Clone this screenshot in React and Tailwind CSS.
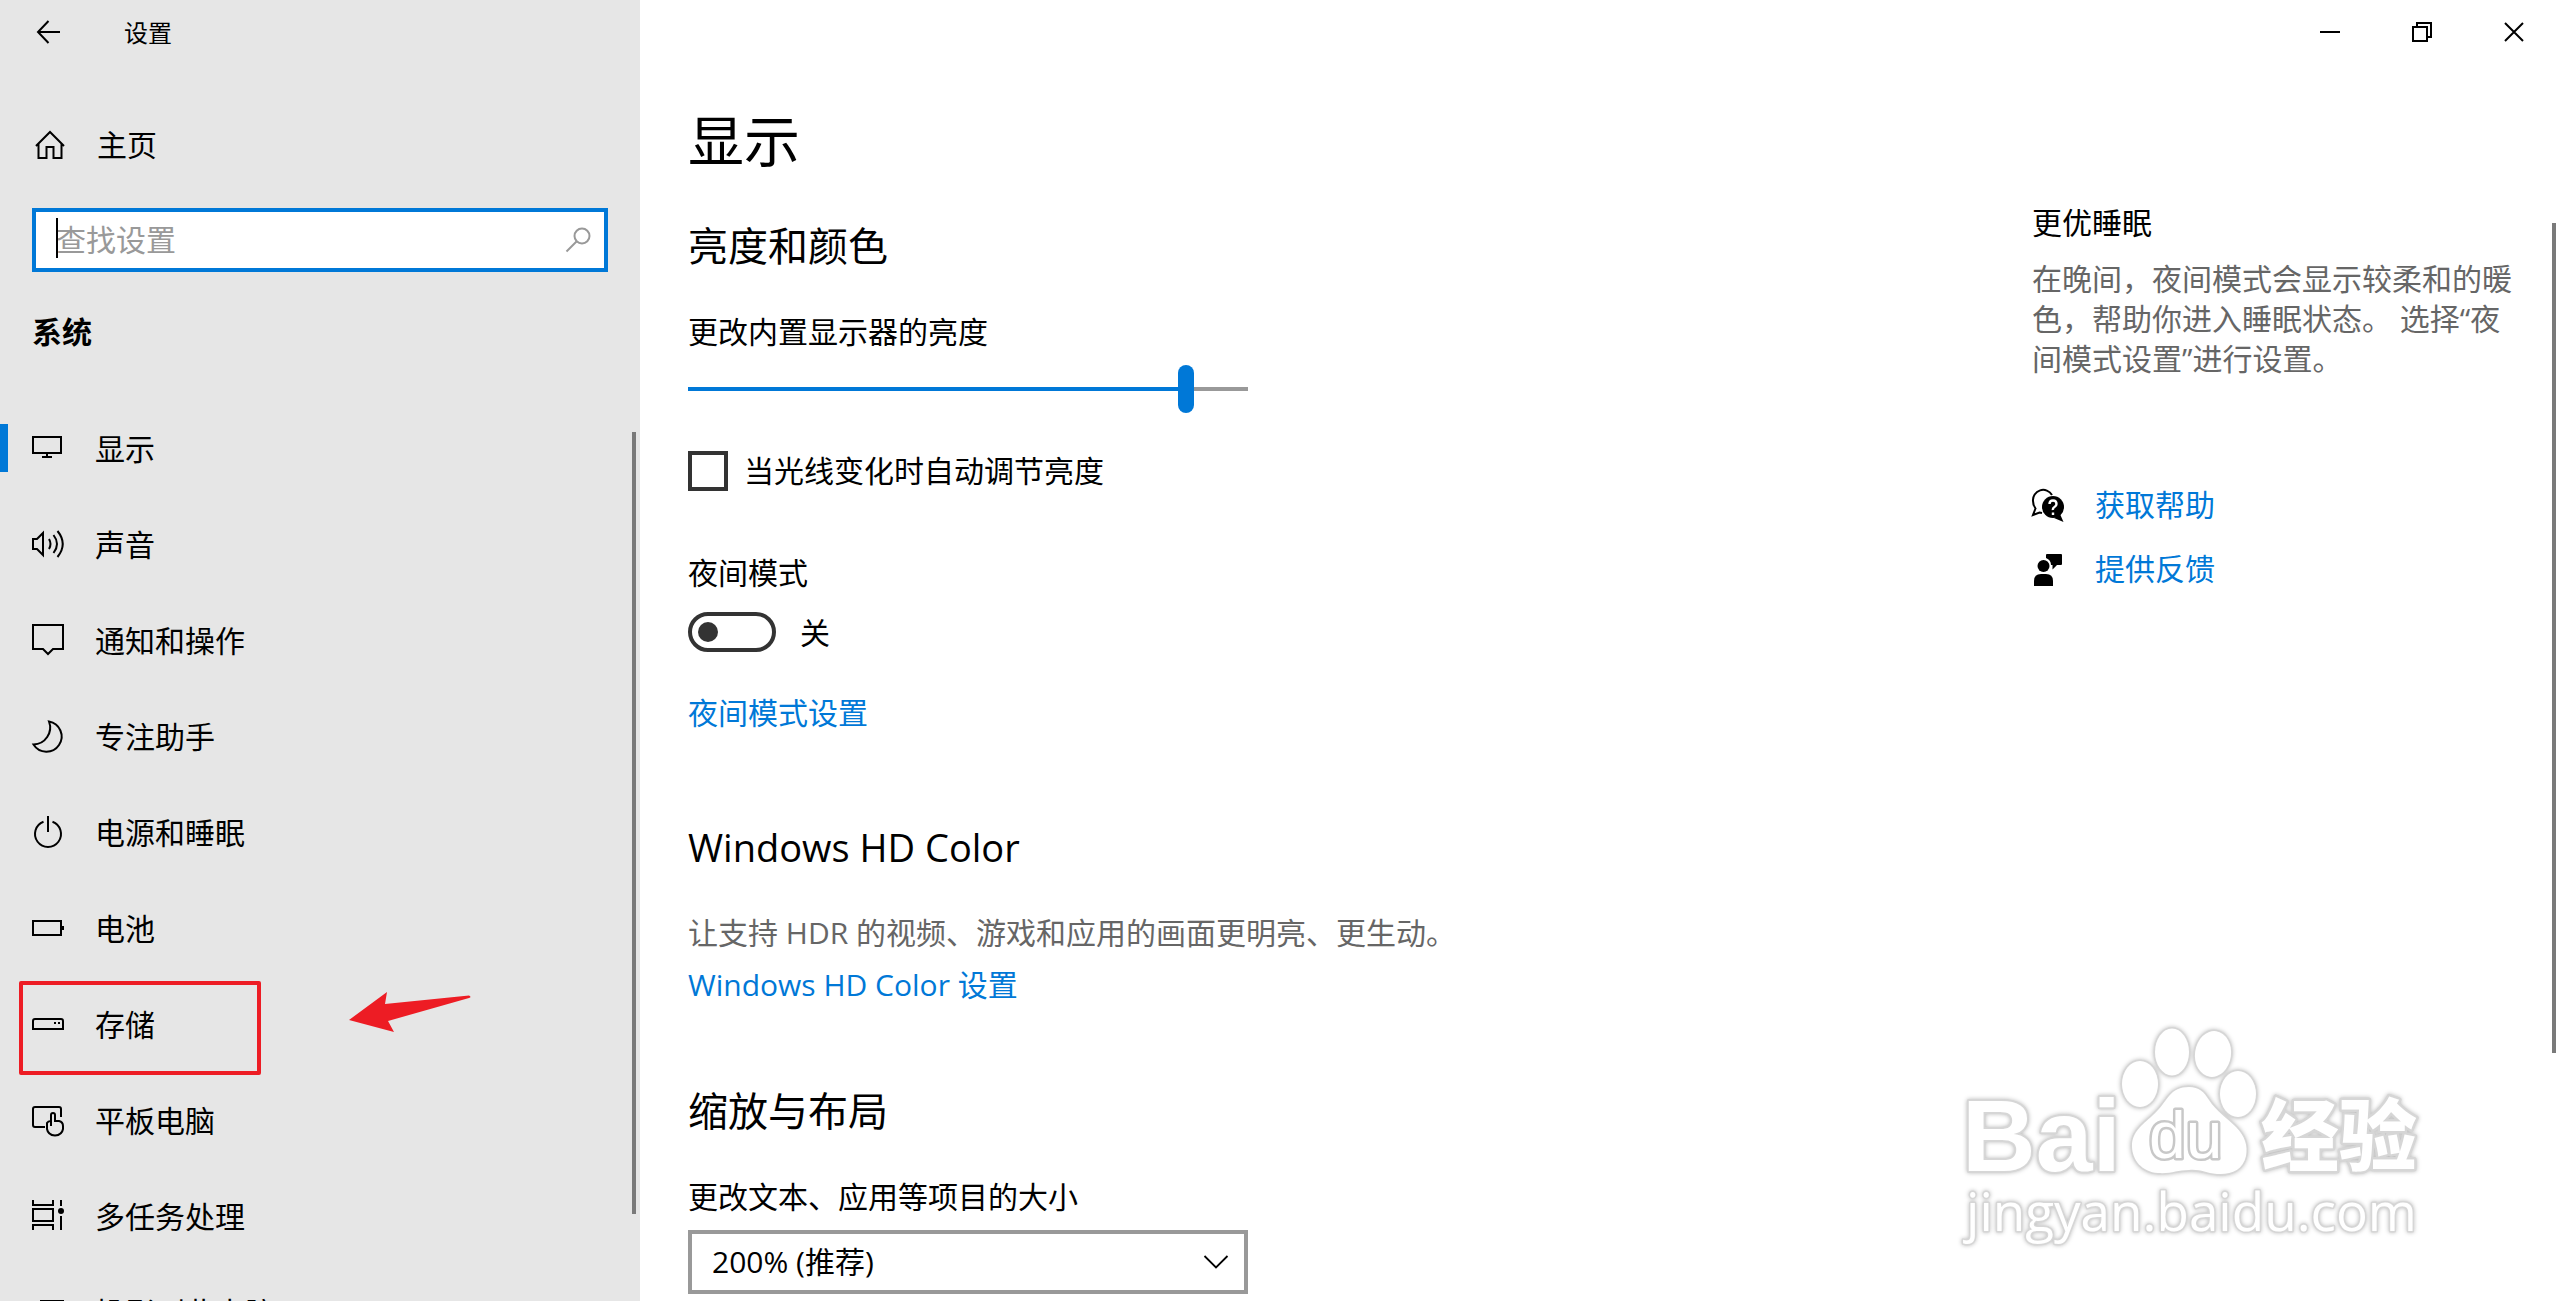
import React, { useState } from "react";

const Icon = ({ children, size = 32, className = "w-8 h-8" }) => (
  <svg
    viewBox={`0 0 ${size} ${size}`}
    fill="none"
    stroke="currentColor"
    strokeWidth="2"
    aria-hidden="true"
    className={`${className} shrink-0 overflow-visible`}
  >
    {children}
  </svg>
);

const navItems = [
  {
    label: "显示",
    icon: <path d="M1 5H29V21H1ZM15 21V25M10 25H20" />,
  },
  {
    label: "声音",
    icon: (
      <path d="M1 11H5L11 5V27L5 21H1ZM17 11Q20 16 17 21M21.500 7Q28.500 16 21.500 25M25.500 3Q36 16 25.500 29" />
    ),
  },
  {
    label: "通知和操作",
    icon: <path d="M1 1H31V25H21L16 30L11 25H1Z" />,
  },
  {
    label: "专注助手",
    icon: <path d="M17 1.500A15.200 15.200 0 1 1 1.500 24.500A17 17 0 0 0 17 1.500Z" />,
  },
  {
    label: "电源和睡眠",
    icon: <path d="M16 0V16M11.500 5.800A13 13 0 1 0 20.500 5.800" />,
  },
  {
    label: "电池",
    icon: <path d="M1 9H29V23H1ZM31 14V18" />,
  },
  {
    label: "存储",
    marked: true,
    icon: (
      <>
        <path d="M1 21V13Q1 11 3 11H29Q31 11 31 13V21Z" />
        <path d="M22 15H24M26 15H28" />
      </>
    ),
  },
  {
    label: "平板电脑",
    icon: (
      <path d="M13 23H3Q1 23 1 21V5Q1 3 3 3H27Q29 3 29 5V13M19 22V11Q19 9 21 9T23 11V17H27Q31 18 31 22V25Q30 31 23 31.500Q16 31 15 25V19Q16 17 19 17" />
    ),
  },
  {
    label: "多任务处理",
    icon: (
      <>
        <path d="M1 0V5H21V0M1 9H21V21H1ZM1 30V25H21V30M29 0V6M29 16V30" />
        <circle cx="29" cy="11" r="3" fill="currentColor" stroke="none" />
      </>
    ),
  },
  {
    label: "投影到此电脑",
    icon: <path d="M9 12V5H31V23H20M1 15H15V29H1Z" />,
  },
];

const Sidebar = () => {
  const [active, setActive] = useState("显示");
  const [query, setQuery] = useState("");

  return (
    <aside className="flex w-1/4 shrink-0 flex-col bg-[#e6e6e6]">
      <header className="flex h-16 shrink-0 items-center gap-16 pl-9">
        <button type="button" aria-label="返回">
          <Icon size={24} className="h-6 w-6">
            <path d="M24 12H2M12.500 1L2 12L12.500 23" />
          </Icon>
        </button>
        <span className="pt-0.5 text-2xl">设置</span>
      </header>

      <button type="button" className="mt-[50px] flex h-16 shrink-0 items-center gap-[31px] pl-[34px]">
        <Icon>
          <path d="M2 16L16 2L30 16M4.500 14V28H12.500V17H19.500V28H27.500V14" />
        </Icon>
        <span className="pb-0.5">主页</span>
      </button>

      <div className="relative mx-8 mt-[30px] shrink-0">
        <input
          type="text"
          aria-label="查找设置"
          placeholder="查找设置"
          value={query}
          onChange={(e) => setQuery(e.target.value)}
          className="h-16 w-full border-4 border-[#0078d7] bg-white pr-16 pb-0.5 pl-5 caret-transparent outline-none placeholder:text-[#999]"
        />
        <span className="absolute top-[10px] left-6 h-10 w-0.5 bg-black" />
        <span className="absolute top-5 right-[18px] text-[#999]">
          <Icon size={24} className="h-6 w-6">
            <circle cx="16" cy="8" r="7.500" />
            <path d="M10.500 13.500L0.500 23.500" />
          </Icon>
        </span>
      </div>

      <h2 className="mx-8 mt-10 shrink-0 font-bold">系统</h2>

      <div className="mt-12 flex min-h-0 flex-1">
        <nav className="min-h-0 flex-1 overflow-hidden">
          <ul>
            {navItems.map(({ label, icon, marked }) => (
              <li key={label} className="relative">
                <button
                  type="button"
                  onClick={() => setActive(label)}
                  className="flex h-24 w-full items-center gap-[31px] pl-8 text-left"
                >
                  <Icon>{icon}</Icon>
                  <span className="pt-0.5">{label}</span>
                </button>
                {active === label && <span className="absolute top-6 left-0 h-12 w-2 bg-[#0078d7]" />}
                {marked && (
                  <>
                    <span className="absolute top-[5px] left-[19px] h-[94px] w-[242px] rounded-xs border-4 border-[#ed1c24]" />
                    <svg viewBox="0 0 122 40" className="absolute top-4 left-[349px] h-10 w-[122px]" aria-hidden="true">
                      <path
                        d="M0 28L38 0L36 12L120 3.500Q123 5 120 6L39 29L45 40Z"
                        fill="#ed1c24"
                      />
                    </svg>
                  </>
                )}
              </li>
            ))}
          </ul>
        </nav>
        <div className="mt-8 mr-1 mb-[87px] w-1 bg-[#7a7a7a]" />
      </div>
    </aside>
  );
};

const WindowControls = () => (
  <div className="flex h-16 shrink-0 justify-end">
    <button type="button" aria-label="最小化" className="flex w-[92px] items-center justify-center">
      <Icon size={20} className="h-5 w-5">
        <path d="M0 10H20" />
      </Icon>
    </button>
    <button type="button" aria-label="还原" className="flex w-[92px] items-center justify-center">
      <Icon size={20} className="h-5 w-5">
        <path d="M1 5H15V19H1ZM5 5V1H19V15H15" />
      </Icon>
    </button>
    <button type="button" aria-label="关闭" className="flex w-[92px] items-center justify-center">
      <Icon size={20} className="h-5 w-5">
        <path d="M1 1L19 19M19 1L1 19" />
      </Icon>
    </button>
  </div>
);

const DisplaySettings = () => {
  const [brightness, setBrightness] = useState(90);
  const [autoAdjust, setAutoAdjust] = useState(false);
  const [nightMode, setNightMode] = useState(false);

  return (
    <main className="flex min-w-0 flex-1 flex-col items-start">
      <h1 className="mt-11 text-[56px] leading-16">显示</h1>

      <h2 className="mt-[50px] text-[40px] leading-12">亮度和颜色</h2>
      <label htmlFor="brightness" className="mt-[42px]">
        更改内置显示器的亮度
      </label>
      <input
        id="brightness"
        type="range"
        min="0"
        max="100"
        value={brightness}
        onChange={(e) => setBrightness(Number(e.target.value))}
        style={{
          backgroundImage: `linear-gradient(to right, #0078d7 ${brightness}%, #999 ${brightness}%)`,
        }}
        className="mt-[13px] h-12 w-[560px] max-w-full appearance-none bg-[length:100%_4px] bg-center bg-no-repeat outline-none [&::-webkit-slider-thumb]:h-12 [&::-webkit-slider-thumb]:w-4 [&::-webkit-slider-thumb]:appearance-none [&::-webkit-slider-thumb]:rounded-full [&::-webkit-slider-thumb]:bg-[#0078d7]"
      />

      <label className="mt-[38px] flex items-center gap-4">
        <input
          type="checkbox"
          checked={autoAdjust}
          onChange={(e) => setAutoAdjust(e.target.checked)}
          className="h-10 w-10 appearance-none border-4 border-[#333] checked:bg-[#0078d7]"
        />
        当光线变化时自动调节亮度
      </label>

      <label htmlFor="night-mode" className="mt-[62px]">
        夜间模式
      </label>
      <div className="mt-[18px] flex items-center gap-6">
        <input
          id="night-mode"
          type="checkbox"
          role="switch"
          checked={nightMode}
          onChange={(e) => setNightMode(e.target.checked)}
          className="flex h-10 w-[88px] appearance-none items-center rounded-full border-4 border-[#333] px-1.5 before:h-5 before:w-5 before:rounded-full before:bg-[#333] before:content-[''] checked:justify-end"
        />
        <span className="pt-0.5">{nightMode ? "开" : "关"}</span>
      </div>
      <a href="#night" className="mt-10 text-[#0078d7]">
        夜间模式设置
      </a>

      <h2 className="mt-[90px] text-[38px] leading-12">Windows HD Color</h2>
      <p className="mt-[42px] text-[#666]">让支持 HDR 的视频、游戏和应用的画面更明亮、更生动。</p>
      <a href="#hdcolor" className="mt-3 text-[#0078d7]">
        Windows HD Color 设置
      </a>

      <h2 className="mt-[82px] text-[40px] leading-12">缩放与布局</h2>
      <label htmlFor="scale" className="mt-[42px]">
        更改文本、应用等项目的大小
      </label>
      <div className="relative mt-[13px] w-[560px] max-w-full">
        <select
          id="scale"
          defaultValue="200"
          className="h-16 w-full appearance-none border-4 border-[#999] bg-white px-5 outline-none"
        >
          <option value="100">100%</option>
          <option value="150">150%</option>
          <option value="200">200% (推荐)</option>
        </select>
        <span className="pointer-events-none absolute top-5 right-5">
          <Icon size={24} className="h-6 w-6">
            <path d="M0.500 6L12 17.500L23.500 6" strokeWidth="1.800" />
          </Icon>
        </span>
      </div>
    </main>
  );
};

const HelpPanel = () => (
  <aside className="mt-[139px] w-[488px] shrink-0">
    <h3>更优睡眠</h3>
    <p className="mt-4 text-[#666]">
      在晚间，夜间模式会显示较柔和的暖色，帮助你进入睡眠状态。 选择“夜间模式设置”进行设置。
    </p>
    <div className="mt-[94px] flex flex-col items-start">
      <a href="#help" className="flex h-16 items-center gap-[31px] text-[#0078d7]">
        <span className="text-black">
          <Icon>
            <path d="M20 6A10.200 10.200 0 0 0 1 12Q1 16 3.500 19.500L1 26L7.500 23.500L10 24" />
            <circle cx="21" cy="18" r="11" fill="currentColor" stroke="none" />
            <path d="M28 25L31.500 33L22 29Z" fill="currentColor" stroke="none" />
            <path d="M17.500 15Q17.500 11.500 21 11.500T24.500 15Q24.500 17 22.500 18T21 21M21 23.500V26" stroke="#fff" strokeWidth="2.400" />
          </Icon>
        </span>
        <span>获取帮助</span>
      </a>
      <a href="#feedback" className="flex h-16 items-center gap-[31px] text-[#0078d7]">
        <span className="text-black">
          <Icon>
            <g fill="currentColor" stroke="none">
              <circle cx="11.500" cy="13" r="6" />
              <path d="M2 33V28Q2 21 9 21H14Q21 21 21 28V33Z" />
              <path d="M14 2Q14 1 15 1H29Q30 1 30 2V11Q30 12 29 12H25L20.500 16.500V12H19Q19 7 14 5Z" />
            </g>
          </Icon>
        </span>
        <span>提供反馈</span>
      </a>
    </div>
  </aside>
);

const Watermark = () => (
  <svg
    viewBox="0 0 480 240"
    className="pointer-events-none absolute right-[130px] bottom-[41px] h-[240px] w-[480px] overflow-visible drop-shadow-[0_0_2px_#bbb]"
    fill="#fff"
    stroke="#d6d6d6"
    strokeWidth="3"
    strokeLinejoin="round"
  >
    <g style={{ paintOrder: "stroke" }}>
      <ellipse cx="190" cy="64" rx="18" ry="23" />
      <ellipse cx="222" cy="32" rx="17" ry="23.500" />
      <ellipse cx="263" cy="34" rx="18" ry="23" transform="rotate(8 263 34)" />
      <ellipse cx="288" cy="74" rx="18" ry="23" />
      <path d="M239 67C249 67 254 72 259 80C266 91 277 98 286 107C295 116 298 126 296 136C293 150 281 155 267 154C255 153 251 149 239 150C227 150 221 154 208 153C192 152 182 140 182 126C182 112 192 105 202 96C211 88 214 82 219 76C224 70 230 67 239 67Z" />
      <text x="12" y="151" fontSize="102" strokeWidth="4" className="font-['Liberation_Sans'] font-bold">
        Bai
      </text>
      <text x="199" y="138" fontSize="66" stroke="#c8c8c8" strokeWidth="5" className="font-['Liberation_Sans']">
        du
      </text>
      <text x="311" y="145" fontSize="78" strokeWidth="5" className="font-['Noto_Sans_CJK_SC'] font-black">
        经验
      </text>
      <text x="16" y="211" fontSize="53" className="font-['Open_Sans']">
        jingyan.baidu.com
      </text>
    </g>
  </svg>
);

const App = () => (
  <div className="relative flex h-screen overflow-hidden bg-white font-['Open_Sans','Noto_Sans_CJK_SC',sans-serif] text-[30px] leading-10 text-black">
    <Sidebar />
    <div className="flex min-w-0 flex-1 flex-col">
      <WindowControls />
      <div className="flex min-h-0 flex-1 pl-12">
        <DisplaySettings />
        <HelpPanel />
        <div className="mt-[159px] mr-1 mb-[248px] ml-8 w-1 shrink-0 bg-[#7a7a7a]" />
      </div>
    </div>
    <Watermark />
  </div>
);

export default App;
